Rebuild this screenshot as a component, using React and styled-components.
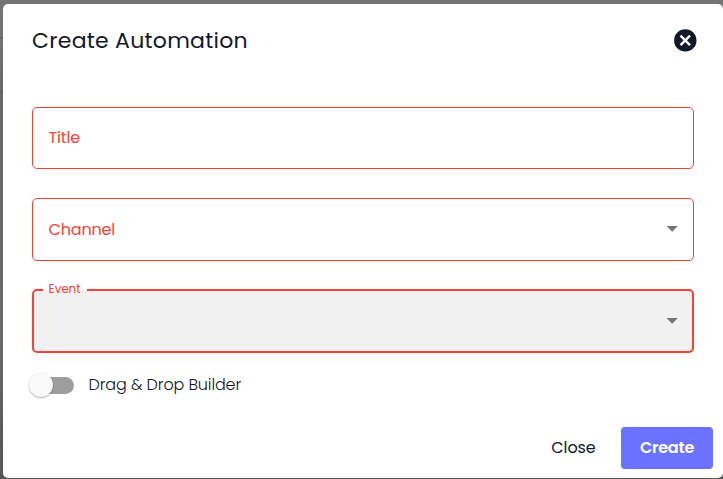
import React from "react";
import styled, { createGlobalStyle } from "styled-components";

const GlobalStyle = createGlobalStyle`
  * { box-sizing: border-box; }
  html, body { margin: 0; height: 100%; overflow: hidden; }
  body { font-family: Poppins, Inter, sans-serif; color: #111827; }
`;

const Backdrop = styled.div`
  width: 723px;
  height: 479px;
  padding: 4px 0 1px 3px;
  background:
    linear-gradient(#5c5c5e, #5c5c5e) 0 37px / 3px 1px no-repeat,
    linear-gradient(#5a5a5a, #5a5a5a) 0 91px / 3px 1px no-repeat,
    linear-gradient(#757577 0, #747476 36px, #69696a 92px, #6a6a6a 340px, #555 479px);
`;

const Dialog = styled.section`
  width: 720px;
  height: 474px;
  padding: 24px 10px 9px 29px;
  display: flex;
  flex-direction: column;
  background: #fff;
  border-radius: 5px;
`;

const Header = styled.header`
  height: 25px;
  padding-right: 16px;
  display: flex;
  align-items: center;
  justify-content: space-between;
`;

const Heading = styled.h1`
  margin: 0;
  font-size: 22px;
  line-height: 25px;
  font-weight: 400;
  letter-spacing: 0.27px;
  white-space: nowrap;
`;

const IconButton = styled.button`
  width: 24px;
  height: 24px;
  padding: 0;
  border: 0;
  background: none;
  color: #111827;
  svg { display: block; }
`;

const Fields = styled.div`
  width: 662px;
  margin-top: 54px;
  display: flex;
  flex-direction: column;
`;

const Field = styled.div`
  height: ${(p) => p.$height}px;
  margin-bottom: ${(p) => p.$gap}px;
  padding: 0 15px 2px 16px;
  display: flex;
  align-items: center;
  justify-content: space-between;
  border: 1px solid #f44336;
  border-radius: 5px;
  color: #f44336;
`;

const FieldLabel = styled.span`
  margin-top: 2px;
  margin-left: -0.4px;
  font-size: 16px;
  line-height: 20px;
  letter-spacing: -0.2px;
`;

const ActiveField = styled.div`
  position: relative;
  height: 64px;
  padding: 0 14px 1px 0;
  display: flex;
  align-items: center;
  justify-content: flex-end;
  border: 2px solid #f44336;
  border-radius: 5px;
  background: #f1f1f1;
`;

const FloatingLabel = styled.span`
  position: absolute;
  left: 9px;
  top: -10px;
  width: 44px;
  height: 15px;
  padding-left: 5.6px;
  background: linear-gradient(#fff 9px, #f1f1f1 9px);
  color: #f44336;
  font-size: 12px;
  line-height: 15px;
  letter-spacing: -0.1px;
`;

const ToggleRow = styled.label`
  height: 24px;
  margin: 20px 0 0 -3px;
  display: flex;
  align-items: center;
`;

const Track = styled.span`
  width: 34px;
  height: 17px;
  margin-left: 11px;
  display: flex;
  align-items: center;
  border-radius: 9px;
  background: #9e9e9e;
`;

const Thumb = styled.span`
  flex: none;
  width: 24px;
  height: 24px;
  margin-left: -11px;
  border-radius: 50%;
  background: #fafafa;
  box-shadow: 0 1px 2px rgba(0, 0, 0, 0.28), 0 0 1px rgba(0, 0, 0, 0.12);
`;

const ToggleText = styled.span`
  margin-left: 14.5px;
  font-size: 16px;
  line-height: 20px;
  font-weight: 300;
  color: #111827;
  letter-spacing: -0.13px;
  white-space: nowrap;
`;

const Actions = styled.footer`
  margin-top: auto;
  display: flex;
  justify-content: flex-end;
  gap: 7px;
`;

const Button = styled.button`
  width: ${(p) => (p.$primary ? 92 : 82)}px;
  height: 42px;
  padding: ${(p) => (p.$primary ? "0 0 2px" : "0 0 2px 1px")};
  border: 0;
  border-radius: 4px;
  background: ${(p) => (p.$primary ? "#6b72ff" : "transparent")};
  color: ${(p) => (p.$primary ? "#fff" : "#111827")};
  font-family: inherit;
  font-size: 16px;
  font-weight: ${(p) => (p.$primary ? 600 : 400)};
  letter-spacing: ${(p) => (p.$primary ? -0.25 : -0.1)}px;
`;

const Arrow = () => (
  <svg width="12" height="6" viewBox="0 0 12 6" aria-hidden="true">
    <path d="M0.5 0h11.3L6.2 5.7z" fill="#757575" />
  </svg>
);

const CloseIcon = () => (
  <svg width="24" height="24" viewBox="0 0 24 24" aria-hidden="true">
    <circle cx="12.3" cy="11.4" r="11.2" fill="currentColor" />
    <path d="M8.4 7.5l7.8 7.8M16.2 7.5l-7.8 7.8" stroke="#fff" strokeWidth="2.4" strokeLinecap="square" />
  </svg>
);

export default function App() {
  return (
    <>
      <GlobalStyle />
      <Backdrop>
        <Dialog role="dialog" aria-label="Create Automation">
          <Header>
            <Heading>Create Automation</Heading>
            <IconButton aria-label="Dismiss"><CloseIcon /></IconButton>
          </Header>
          <Fields>
            <Field $height={62} $gap={29}>
              <FieldLabel>Title</FieldLabel>
            </Field>
            <Field $height={63} $gap={28}>
              <FieldLabel>Channel</FieldLabel>
              <Arrow />
            </Field>
            <ActiveField>
              <FloatingLabel>Event</FloatingLabel>
              <Arrow />
            </ActiveField>
          </Fields>
          <ToggleRow>
            <Track><Thumb /></Track>
            <ToggleText>Drag &amp; Drop Builder</ToggleText>
          </ToggleRow>
          <Actions>
            <Button>Close</Button>
            <Button $primary>Create</Button>
          </Actions>
        </Dialog>
      </Backdrop>
    </>
  );
}
